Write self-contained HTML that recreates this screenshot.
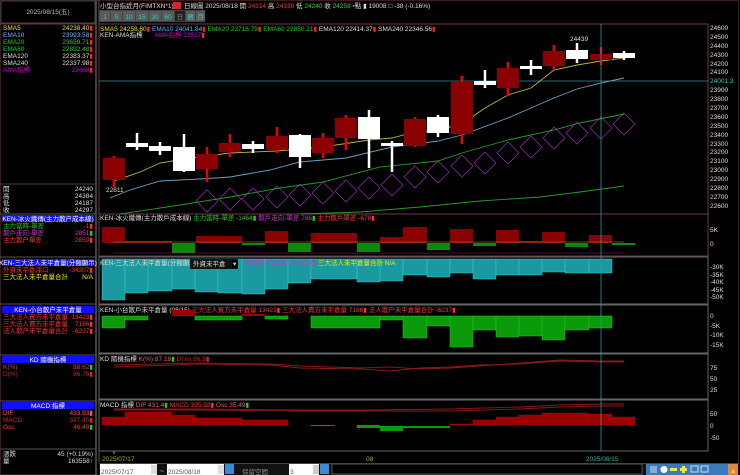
<!DOCTYPE html>
<html><head><meta charset="utf-8"><style>
html,body{margin:0;padding:0;background:#000;width:740px;height:475px;overflow:hidden}
svg{display:block}
text{font-family:"Liberation Sans","Noto Sans CJK TC",sans-serif;font-size:6.5px}
.m{font-family:"Liberation Mono","Noto Sans CJK TC",monospace}
</style></head><body>
<svg width="740" height="475" viewBox="0 0 740 475" xmlns="http://www.w3.org/2000/svg">
<rect width="740" height="475" fill="#000"/>
<rect x="0.5" y="0.5" width="738" height="474" fill="none" stroke="#3a1a1a"/>
<line x1="96" y1="0" x2="96" y2="475" stroke="#555" stroke-width="1.5"/>
<line x1="99" y1="0" x2="99" y2="462" stroke="#555" stroke-width="1"/>
<rect x="1" y="1" width="94" height="22" fill="#000" stroke="#444"/>
<text x="48" y="14" fill="#bbb" text-anchor="middle" font-size="6">2025/08/15(五)</text>
<line x1="0" y1="24" x2="96" y2="24" stroke="#6a3040"/>
<g class="m" font-size="6">
<text x="3" y="30" fill="#e0e040">SMA5</text><text x="93" y="30" fill="#e0e040" text-anchor="end">24238.40<tspan fill="#f22">▮</tspan></text>
<text x="3" y="37" fill="#6ab0ff">EMA10</text><text x="93" y="37" fill="#6ab0ff" text-anchor="end">23993.58<tspan fill="#f22">▮</tspan></text>
<text x="3" y="44" fill="#2c2">EMA20</text><text x="93" y="44" fill="#2c2" text-anchor="end">23659.71<tspan fill="#f22">▮</tspan></text>
<text x="3" y="51" fill="#2c2">EMA60</text><text x="93" y="51" fill="#2c2" text-anchor="end">22892.48<tspan fill="#f22">▮</tspan></text>
<text x="3" y="58" fill="#ddd">EMA120</text><text x="93" y="58" fill="#ddd" text-anchor="end">22383.37<tspan fill="#f22">▮</tspan></text>
<text x="3" y="65" fill="#ddd">SMA240</text><text x="93" y="65" fill="#ddd" text-anchor="end">22337.98<tspan fill="#f22">▮</tspan></text>
<text x="3" y="72" fill="#c0c">AMA指標</text><text x="93" y="72" fill="#c0c" text-anchor="end">23468<tspan fill="#f22">▮</tspan></text>
</g>
<line x1="0" y1="184" x2="96" y2="184" stroke="#444"/>
<g font-size="6" fill="#ddd">
<text x="3" y="191">開</text><text x="93" y="191" text-anchor="end">24240</text>
<text x="3" y="198">高</text><text x="93" y="198" text-anchor="end">24384</text>
<text x="3" y="205">低</text><text x="93" y="205" text-anchor="end">24187</text>
<text x="3" y="212">收</text><text x="93" y="212" text-anchor="end">24297</text>
</g>
<line x1="0" y1="214" x2="96" y2="214" stroke="#555"/>
<rect x="2" y="215" width="92" height="7" fill="#1010ff"/>
<text x="48" y="221" fill="#fff" text-anchor="middle" font-size="5.5">KEN-冰火織傳(主力散户成本線)</text>
<g font-size="5.5">
<text x="3" y="228" fill="#2c2">主力當時-單差</text><text x="93" y="228" fill="#f33" text-anchor="end">-1▮</text>
<text x="3" y="235" fill="#c3c">散戶走向-單差</text><text x="93" y="235" fill="#c3c" text-anchor="end">2851<tspan fill="#2c2">▮</tspan></text>
<text x="3" y="242" fill="#f33">主力散户單差</text><text x="93" y="242" fill="#f33" text-anchor="end">2850▮</text>
</g>
<line x1="0" y1="257" x2="96" y2="257" stroke="#555"/>
<rect x="2" y="259" width="92" height="7" fill="#1010ff"/>
<text x="48" y="265" fill="#fff" text-anchor="middle" font-size="5.5">KEN-三大法人未平倉量(分類顯示)</text>
<g font-size="5.5">
<text x="3" y="272" fill="#f33">外資未平倉淨口</text><text x="93" y="272" fill="#f33" text-anchor="end">-34207▮</text>
<text x="3" y="279" fill="#ee0">三大法人未平倉量合計</text><text x="93" y="279" fill="#ee0" text-anchor="end">N/A</text>
</g>
<line x1="0" y1="304" x2="96" y2="304" stroke="#555"/>
<rect x="2" y="306" width="92" height="7" fill="#1010ff"/>
<text x="48" y="312" fill="#fff" text-anchor="middle" font-size="5.5">KEN-小台散户未平倉量</text>
<g font-size="5.5">
<text x="3" y="319" fill="#f33">三大法人買方未平倉量</text><text x="93" y="319" fill="#f33" text-anchor="end">13423▮</text>
<text x="3" y="326" fill="#f33">三大法人賣方未平倉量</text><text x="93" y="326" fill="#f33" text-anchor="end">7186▮</text>
<text x="3" y="333" fill="#f33">法人散户未平倉量合計</text><text x="93" y="333" fill="#f33" text-anchor="end">-6237▮</text>
</g>
<line x1="0" y1="355" x2="96" y2="355" stroke="#555"/>
<rect x="2" y="356" width="92" height="7" fill="#1010ff"/>
<text x="48" y="362" fill="#fff" text-anchor="middle" font-size="5.5">KD 隨機指標</text>
<g font-size="5.5">
<text x="3" y="369" fill="#c44">K(%)</text><text x="93" y="369" fill="#c44" text-anchor="end">88.62<tspan fill="#2c2">▮</tspan></text>
<text x="3" y="376" fill="#c22">D(%)</text><text x="93" y="376" fill="#c22" text-anchor="end">86.76▮</text>
</g>
<line x1="0" y1="401" x2="96" y2="401" stroke="#555"/>
<rect x="2" y="402" width="92" height="7" fill="#1010ff"/>
<text x="48" y="408" fill="#fff" text-anchor="middle" font-size="5.5">MACD 指標</text>
<g font-size="5.5">
<text x="3" y="415" fill="#f55">DIF</text><text x="93" y="415" fill="#f55" text-anchor="end">433.93▮</text>
<text x="3" y="422" fill="#c22">MACD</text><text x="93" y="422" fill="#c22" text-anchor="end">387.45▮</text>
<text x="3" y="429" fill="#f33">Osc</text><text x="93" y="429" fill="#f33" text-anchor="end">46.49<tspan fill="#2c2">▮</tspan></text>
</g>
<line x1="0" y1="449" x2="96" y2="449" stroke="#555"/>
<g font-size="5.5" fill="#ddd">
<text x="3" y="456">漲跌</text><text x="93" y="456" text-anchor="end">45 (+0.19%)</text>
<text x="3" y="463">量</text><text x="93" y="463" text-anchor="end">163558↑</text>
</g>

<text x="100" y="8" fill="#ddd" font-size="7.5">小型台指近月(FIMTXN*1)</text>
<rect x="173" y="2" width="8" height="7" fill="#d22"/>
<text x="184" y="8" fill="#ddd" font-size="7.8">日線圖  2025/08/18  開 <tspan fill="#f33">24314</tspan> 高 <tspan fill="#f33">24339</tspan> 低 <tspan fill="#2d2">24240</tspan> 收 <tspan fill="#2d2">24259</tspan> <tspan fill="#2d2">▪</tspan>點 ▮ 19008 □  -38 (-0.16%)</text>
<g font-size="7" text-anchor="middle">
<rect x="99" y="10" width="106" height="12" fill="#444"/>
<rect x="100" y="11" width="10" height="10" fill="#5a5a5a"/><text x="105" y="19" fill="#3cc">1</text>
<rect x="111" y="11" width="11" height="10" fill="#5a5a5a"/><text x="116.5" y="19" fill="#3cc">5</text>
<rect x="123" y="11" width="12" height="10" fill="#5a5a5a"/><text x="129" y="19" fill="#3cc">10</text>
<rect x="136" y="11" width="12" height="10" fill="#5a5a5a"/><text x="142" y="19" fill="#3cc">15</text>
<rect x="149" y="11" width="12" height="10" fill="#5a5a5a"/><text x="155" y="19" fill="#3cc">30</text>
<rect x="162" y="11" width="12" height="10" fill="#5a5a5a"/><text x="168" y="19" fill="#3cc">60</text>
<rect x="175" y="11" width="10" height="10" fill="#222"/><text x="180" y="19" fill="#888">日</text>
<rect x="186" y="11" width="9" height="10" fill="#5a5a5a"/><text x="190.5" y="19" fill="#3cc">週</text>
<rect x="196" y="11" width="9" height="10" fill="#5a5a5a"/><text x="200.5" y="19" fill="#3cc">月</text>
</g>

<g fill="none" stroke="#6a3a4a">
<rect x="99" y="24" width="609" height="190"/>
</g>
<g fill="none" stroke="#666">
<rect x="99" y="214" width="609" height="42"/>
<rect x="99" y="257" width="609" height="47"/>
<rect x="99" y="305" width="609" height="48"/>
<rect x="99" y="354" width="609" height="45"/>
<rect x="99" y="400" width="609" height="51"/>
</g>
<rect x="99" y="214" width="609" height="42" fill="none" stroke="#6a3a4a"/>

<g fill="#ddd" font-size="6.5">
<text x="710" y="30">24600</text><text x="710" y="39">24500</text><text x="710" y="48">24400</text><text x="710" y="57">24300</text><text x="710" y="66">24200</text><text x="710" y="74">24100</text>
<text x="710" y="83" fill="#3cc">24001.3</text>
<text x="710" y="92">23900</text><text x="710" y="101">23800</text><text x="710" y="110">23700</text><text x="710" y="119">23600</text><text x="710" y="128">23500</text><text x="710" y="137">23400</text><text x="710" y="146">23300</text><text x="710" y="154">23200</text><text x="710" y="163">23100</text><text x="710" y="172">23000</text><text x="710" y="181">22900</text><text x="710" y="190">22800</text><text x="710" y="199">22700</text><text x="710" y="208">22600</text>
<text x="710" y="232">5K</text><text x="710" y="246">0</text>
<text x="710" y="269">-30K</text><text x="710" y="277">-35K</text><text x="710" y="284">-40K</text><text x="710" y="292">-45K</text><text x="710" y="299">-50K</text>
<text x="710" y="318">0</text><text x="710" y="328">-5K</text><text x="710" y="337">-10K</text><text x="710" y="347">-15K</text>
<text x="710" y="370">75</text><text x="710" y="381">50</text><text x="710" y="392">25</text>
<text x="710" y="416">50</text><text x="710" y="428">0</text><text x="710" y="440">-50</text>
</g>

<text x="100" y="31" font-size="6"><tspan fill="#e0e040">SMA5 24258.60</tspan><tspan fill="#f22">▮</tspan>  <tspan fill="#6ab0ff">EMA10 24041.84</tspan><tspan fill="#f22">▮</tspan>  <tspan fill="#2c2">EMA20 23716.79</tspan><tspan fill="#f22">▮</tspan>  <tspan fill="#2c2">EMA60 22850.21</tspan><tspan fill="#f22">▮</tspan>  <tspan fill="#ddd">EMA120 22414.37</tspan><tspan fill="#f22">▮</tspan>  <tspan fill="#ddd">SMA240 22346.56</tspan><tspan fill="#f22">▮</tspan></text>
<text x="100" y="37" font-size="6" fill="#ddd">KEN-AMA指標 <tspan fill="#c0c" dx="10">AMA指標 23517</tspan><tspan fill="#f22">▮</tspan></text>

<line x1="99" y1="81" x2="708" y2="81" stroke="#2a9a9a" stroke-width="0.8"/>

<g fill="none" stroke="#8a2aa0" stroke-width="0.8">
<path d="M207,190 l11,11 l-11,11 l-11,-11z"/>
<path d="M230,188 l11,11 l-11,11 l-11,-11z"/>
<path d="M253,188 l11,11 l-11,11 l-11,-11z"/>
<path d="M277,186 l11,11 l-11,11 l-11,-11z"/>
<path d="M300,184 l11,11 l-11,11 l-11,-11z"/>
<path d="M323,182 l11,11 l-11,11 l-11,-11z"/>
<path d="M346,180 l11,11 l-11,11 l-11,-11z"/>
<path d="M369,177 l11,11 l-11,11 l-11,-11z"/>
<path d="M392,174 l11,11 l-11,11 l-11,-11z"/>
<path d="M415,166 l11,11 l-11,11 l-11,-11z"/>
<path d="M438,161 l11,11 l-11,11 l-11,-11z"/>
<path d="M462,155 l11,11 l-11,11 l-11,-11z"/>
<path d="M485,152 l11,11 l-11,11 l-11,-11z"/>
<path d="M508,142 l11,11 l-11,11 l-11,-11z"/>
<path d="M531,136 l11,11 l-11,11 l-11,-11z"/>
<path d="M554,127 l11,11 l-11,11 l-11,-11z"/>
<path d="M577,122 l11,11 l-11,11 l-11,-11z"/>
<path d="M601,117 l11,11 l-11,11 l-11,-11z"/>
<path d="M624,113 l11,11 l-11,11 l-11,-11z"/>
</g>

<g fill="none" stroke-width="0.9">
<polyline stroke="#2a9a2a" points="300,214 360,212 420,207 480,201 540,197 580,192 624,186"/>
<polyline stroke="#2a9a2a" points="120,214 180,205 230,197 280,188 323,182 380,167 438,161 462,153 508,140 554,130 580,123 624,114"/>
<polyline stroke="#6aa0c0" points="110,198 130,190 160,181 200,179 230,177 270,170 300,162 346,158 392,147 438,141 462,135 508,118 554,98 577,89 601,83 624,78"/>
<polyline stroke="#c0b040" points="114,181 140,172 160,163 184,159 230,153 277,151 323,147 369,140 392,138 415,132 438,130 462,124 485,108 508,95 531,88 554,70 577,65 601,61 624,58"/>
</g>

<g>
<g stroke-width="2.5">
<line x1="114" y1="156" x2="114" y2="187" stroke="#e00"/>
<line x1="137" y1="133" x2="137" y2="150" stroke="#fff"/>
<line x1="160" y1="142" x2="160" y2="155" stroke="#fff"/>
<line x1="184" y1="134" x2="184" y2="172" stroke="#fff"/>
<line x1="207" y1="147" x2="207" y2="182" stroke="#e00"/>
<line x1="230" y1="134" x2="230" y2="157" stroke="#e00"/>
<line x1="253" y1="141" x2="253" y2="153" stroke="#fff"/>
<line x1="277" y1="127" x2="277" y2="153" stroke="#e00"/>
<line x1="300" y1="134" x2="300" y2="168" stroke="#fff"/>
<line x1="323" y1="133" x2="323" y2="158" stroke="#e00"/>
<line x1="346" y1="115" x2="346" y2="150" stroke="#e00"/>
<line x1="369" y1="110" x2="369" y2="168" stroke="#fff"/>
<line x1="392" y1="141" x2="392" y2="172" stroke="#fff"/>
<line x1="415" y1="117" x2="415" y2="147" stroke="#e00"/>
<line x1="438" y1="115" x2="438" y2="137" stroke="#fff"/>
<line x1="462" y1="76" x2="462" y2="144" stroke="#e00"/>
<line x1="485" y1="70" x2="485" y2="88" stroke="#fff"/>
<line x1="508" y1="62" x2="508" y2="96" stroke="#e00"/>
<line x1="531" y1="60" x2="531" y2="75" stroke="#fff"/>
<line x1="554" y1="45" x2="554" y2="70" stroke="#e00"/>
<line x1="577" y1="43" x2="577" y2="63" stroke="#fff"/>
<line x1="601" y1="47" x2="601" y2="65" stroke="#e00"/>
<line x1="624" y1="51" x2="624" y2="60" stroke="#fff"/>
</g>
<g fill="#8b0000">
<rect x="103" y="158" width="22" height="22"/>
<rect x="196" y="154" width="22" height="15"/>
<rect x="219" y="143" width="22" height="9"/>
<rect x="266" y="136" width="22" height="14"/>
<rect x="312" y="138" width="22" height="15"/>
<rect x="335" y="118" width="22" height="20"/>
<rect x="404" y="119" width="22" height="27"/>
<rect x="451" y="82" width="22" height="52"/>
<rect x="497" y="68" width="22" height="20"/>
<rect x="543" y="51" width="22" height="15"/>
<rect x="590" y="54" width="22" height="6"/>
</g>
<g fill="#fff">
<rect x="126" y="143" width="22" height="4"/>
<rect x="149" y="146" width="22" height="5"/>
<rect x="173" y="147" width="22" height="24"/>
<rect x="242" y="144" width="22" height="5"/>
<rect x="289" y="135" width="22" height="22"/>
<rect x="358" y="117" width="22" height="22"/>
<rect x="381" y="143" width="22" height="3"/>
<rect x="427" y="117" width="22" height="16"/>
<rect x="474" y="81" width="22" height="4"/>
<rect x="520" y="66" width="22" height="3"/>
<rect x="566" y="50" width="22" height="9"/>
<rect x="613" y="53" width="22" height="5"/>
</g>
<text x="570" y="41" fill="#ddd" font-size="6.5">24439</text>
<text x="106" y="192" fill="#ddd" font-size="6">22811</text>
</g>

<text x="100" y="220" font-size="5.5" fill="#ddd">KEN-冰火織傳(主力散戶成本線)  <tspan fill="#2c2">主力當時-單差 -1464</tspan><tspan fill="#2c2">▮</tspan>  <tspan fill="#c3c">散戶走向-單差 786</tspan><tspan fill="#2c2">▮</tspan>  <tspan fill="#f33">主力散戶單差 -678▮</tspan></text>
<g fill="#8b0000">
<rect x="102" y="227" width="23" height="16"/>
<rect x="125" y="241" width="47" height="2"/>
<rect x="196" y="236" width="46" height="7"/>
<rect x="265" y="231" width="23" height="12"/>
<rect x="311" y="233" width="46" height="10"/>
<rect x="380" y="237" width="23" height="6"/>
<rect x="403" y="227" width="24" height="16"/>
<rect x="450" y="229" width="23" height="14"/>
<rect x="496" y="230" width="23" height="13"/>
<rect x="519" y="241" width="23" height="2"/>
<rect x="542" y="232" width="23" height="11"/>
<rect x="589" y="235" width="23" height="8"/>
</g>
<g fill="#0a8a0a">
<rect x="172" y="243" width="23" height="10"/>
<rect x="242" y="243" width="23" height="2"/>
<rect x="288" y="243" width="23" height="9"/>
<rect x="357" y="243" width="23" height="9"/>
<rect x="427" y="243" width="23" height="7"/>
<rect x="473" y="243" width="23" height="3"/>
<rect x="565" y="243" width="23" height="4"/>
<rect x="612" y="243" width="23" height="2"/>
</g>
<line x1="114" y1="242" x2="624" y2="242" stroke="#a0a020" stroke-width="0.6"/>
<line x1="114" y1="253" x2="624" y2="253" stroke="#a02060" stroke-width="0.6"/>

<g fill="#1a9aa0" stroke="#3cc" stroke-width="0.5">
<rect x="102" y="259" width="23" height="41"/>
<rect x="125" y="259" width="23" height="34"/>
<rect x="148" y="259" width="24" height="32"/>
<rect x="172" y="259" width="23" height="30"/>
<rect x="195" y="259" width="23" height="33"/>
<rect x="218" y="259" width="24" height="34"/>
<rect x="242" y="259" width="23" height="35"/>
<rect x="265" y="259" width="23" height="30"/>
<rect x="288" y="259" width="23" height="24"/>
<rect x="311" y="259" width="46" height="20"/>
<rect x="357" y="259" width="23" height="23"/>
<rect x="380" y="259" width="23" height="22"/>
<rect x="403" y="259" width="24" height="16"/>
<rect x="427" y="259" width="23" height="18"/>
<rect x="450" y="259" width="23" height="14"/>
<rect x="473" y="259" width="23" height="20"/>
<rect x="496" y="259" width="23" height="16"/>
<rect x="519" y="259" width="23" height="16"/>
<rect x="542" y="259" width="23" height="13"/>
<rect x="565" y="259" width="24" height="14"/>
<rect x="589" y="259" width="23" height="14"/>
</g>
<text x="100" y="265" font-size="5.5" fill="#ddd">KEN-三大法人未平倉量(分類顯示)</text>
<rect x="190" y="259" width="48" height="10" fill="#111"/>
<text x="193" y="266" font-size="5.5" fill="#ddd">外資未平倉</text>
<rect x="232" y="260" width="6" height="8" fill="#000"/><text x="233" y="266" font-size="5" fill="#ddd">▾</text>
<text x="245" y="265" font-size="5.5" fill="#c3c">外資未平倉淨口 -34207▮ <tspan fill="#ee0">三大法人未平倉量合計 N/A</tspan></text>

<text x="100" y="312" font-size="5.5" fill="#ddd">KEN-小台散戶未平倉量 (08/15)   <tspan fill="#f33">三大法人買方未平倉量 13423▮</tspan>  <tspan fill="#f33">三大法人賣方未平倉量 7186▮</tspan>  <tspan fill="#f33">法人散户未平倉量合計 -6237▮</tspan></text>
<g fill="#0a9a0a" stroke="#2c2" stroke-width="0.5">
<rect x="102" y="316" width="23" height="12"/>
<rect x="125" y="316" width="23" height="4"/>
<rect x="195" y="316" width="47" height="4"/>
<rect x="265" y="316" width="23" height="3"/>
<rect x="311" y="316" width="69" height="12"/>
<rect x="380" y="316" width="23" height="4"/>
<rect x="403" y="316" width="24" height="22"/>
<rect x="427" y="316" width="23" height="10"/>
<rect x="450" y="316" width="23" height="31"/>
<rect x="473" y="316" width="23" height="14"/>
<rect x="496" y="316" width="23" height="21"/>
<rect x="519" y="316" width="23" height="20"/>
<rect x="542" y="316" width="23" height="24"/>
<rect x="565" y="316" width="24" height="14"/>
<rect x="589" y="316" width="23" height="12"/>
</g>
<g fill="#9a0000">
<rect x="172" y="310" width="23" height="6"/>
<rect x="242" y="314" width="23" height="2"/>
</g>

<text x="100" y="361" font-size="5.5" fill="#ddd">KD 隨機指標   <tspan fill="#d66">K(%) 87.18</tspan><tspan fill="#2c2">▮</tspan>  <tspan fill="#c22">D(%) 86.9▮</tspan></text>
<g fill="none" stroke="#8a1a1a" stroke-width="0.9">
<polyline points="114,365 200,363 270,364 300,366 360,368 390,367 420,369 450,368 480,366 520,363 560,360 600,361 624,361"/>
<polyline points="114,367 200,364 270,365 300,368 360,369 390,371 420,368 450,367 480,365 520,364 560,361 600,362 624,362"/>
</g>

<text x="100" y="407" font-size="5.5" fill="#ddd">MACD 指標   <tspan fill="#d66">DIF 431.4</tspan><tspan fill="#2c2">▮</tspan>  <tspan fill="#f33">MACD 395.92▮</tspan>  <tspan fill="#d66">Osc 35.49</tspan><tspan fill="#2c2">▮</tspan></text>
<g fill="none" stroke="#8a1a1a" stroke-width="0.9">
<polyline points="114,409 200,409 300,410 370,410 450,409 520,407 560,405 600,404 624,404"/>
<polyline points="114,410 200,410 300,411 370,411 450,411 520,409 560,407 600,406 624,406"/>
</g>
<g fill="#9a0000" stroke="#b00" stroke-width="0.4">
<rect x="102" y="417" width="23" height="8"/>
<rect x="125" y="412" width="47" height="13"/>
<rect x="172" y="415" width="23" height="10"/>
<rect x="195" y="418" width="47" height="7"/>
<rect x="242" y="420" width="46" height="5"/>
<rect x="450" y="424" width="23" height="1"/>
<rect x="473" y="420" width="23" height="5"/>
<rect x="496" y="417" width="23" height="8"/>
<rect x="519" y="415" width="23" height="10"/>
<rect x="542" y="413" width="46" height="12"/>
<rect x="588" y="414" width="24" height="11"/>
<rect x="612" y="417" width="23" height="8"/>
</g>
<g fill="#0a9a0a">
<rect x="311" y="425" width="23" height="1"/>
<rect x="357" y="425" width="23" height="3"/>
<rect x="380" y="426" width="23" height="5"/>
<rect x="403" y="426" width="47" height="2"/>
</g>

<line x1="601" y1="24" x2="601" y2="451" stroke="#2a9aaa" stroke-width="0.8"/>

<line x1="114" y1="451" x2="114" y2="454" stroke="#aa0"/>
<text x="102" y="461" font-size="5.5" fill="#aa0">2025/07/17</text>
<text x="366" y="461" font-size="5.5" fill="#aa0">08</text>
<text x="586" y="461" font-size="5.5" fill="#3aa">2025/08/15</text>

<rect x="99" y="463" width="640" height="12" fill="#111"/>
<rect x="100" y="464" width="57" height="11" fill="#fff"/>
<text x="101" y="474" font-size="9" fill="#555" font-family="Liberation Serif">2025/07/17</text>
<rect x="151" y="465" width="6" height="9" fill="#ddd"/>
<text x="160" y="473" font-size="7" fill="#ddd">~</text>
<rect x="167" y="464" width="57" height="11" fill="#fff"/>
<text x="168" y="474" font-size="9" fill="#555" font-family="Liberation Serif">2025/08/18</text>
<rect x="218" y="465" width="6" height="9" fill="#ddd"/>
<rect x="225" y="464" width="9" height="10" fill="#3a8ad8"/>
<text x="242" y="474" font-size="10" fill="#888" font-family="Noto Serif CJK SC,serif">保留空間</text>
<rect x="289" y="464" width="30" height="11" fill="#fff"/>
<text x="290" y="474" font-size="9" fill="#555">3</text>
<rect x="313" y="465" width="6" height="9" fill="#ccc"/>
<rect x="320" y="464" width="9" height="10" fill="#3a8ad8"/>
<rect x="332" y="464" width="310" height="10" fill="#000" stroke="#555"/>
<rect x="646" y="464" width="92" height="11" fill="#3a7ab8"/>
<rect x="650" y="466" width="7" height="7" fill="#8ac"/>
<circle cx="664" cy="469.5" r="3.5" fill="#fff"/>
<rect x="670" y="468" width="7" height="3" fill="#ee3"/>
<rect x="680" y="468" width="7" height="3" fill="#ee3"/><rect x="682" y="466" width="3" height="7" fill="#ee3"/>
<rect x="691" y="466" width="7" height="6" fill="none" stroke="#cde"/>
<rect x="701" y="466" width="7" height="6" fill="none" stroke="#cde"/>
<rect x="728" y="464" width="10" height="11" fill="#d84"/>
<text x="730" y="473" font-size="8" fill="#fd4">▲</text>
<rect x="99" y="463" width="640" height="1" fill="#444"/>
</svg>
</body></html>
